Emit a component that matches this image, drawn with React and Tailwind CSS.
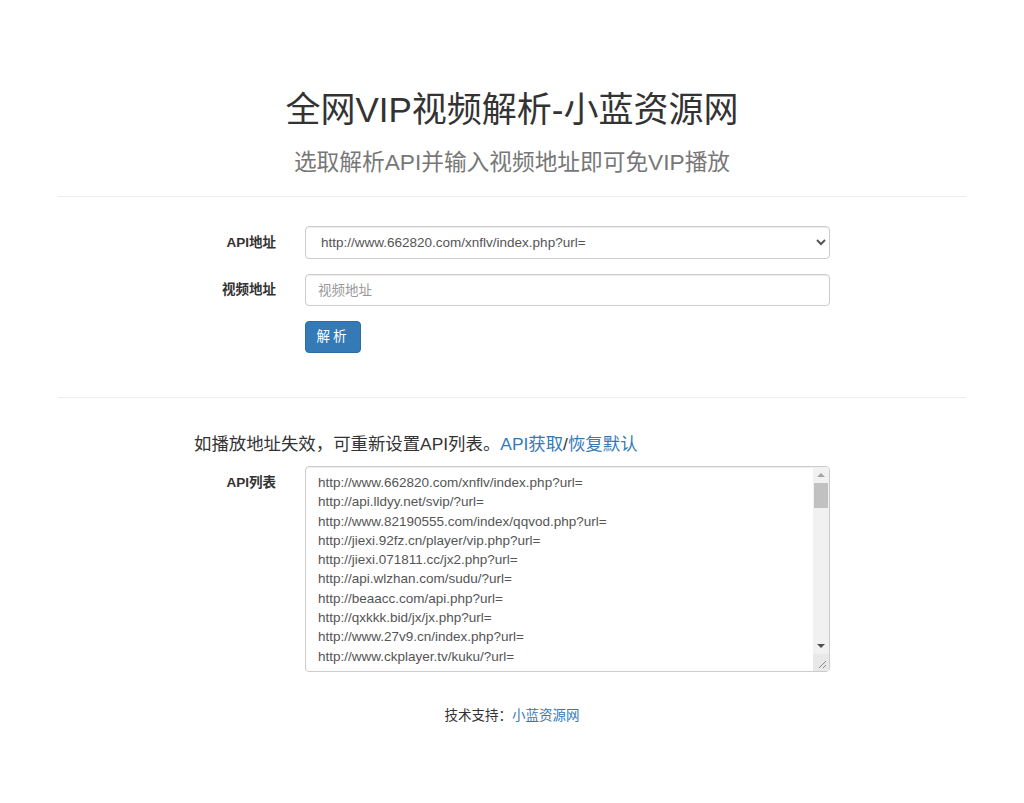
import { useState } from 'react';

const apis = [
  'http://www.662820.com/xnflv/index.php?url=',
  'http://api.lldyy.net/svip/?url=',
  'http://www.82190555.com/index/qqvod.php?url=',
  'http://jiexi.92fz.cn/player/vip.php?url=',
  'http://jiexi.071811.cc/jx2.php?url=',
  'http://api.wlzhan.com/sudu/?url=',
  'http://beaacc.com/api.php?url=',
  'http://qxkkk.bid/jx/jx.php?url=',
  'http://www.27v9.cn/index.php?url=',
  'http://www.ckplayer.tv/kuku/?url=',
  'http://jx.3gdown.cc/jx/?url=',
  'http://api.baiyug.cn/vip/index.php?url=',
  'http://jx.vgoodapi.com/jx.php?url=',
  'http://www.wmxz.wang/video.php?url=',
  'http://yun.baiyug.cn/vip/?url=',
  'http://api.xfsub.com/index.php?url=',
  'http://vip.jlsprh.com/index.php?url=',
  'http://jx.aeidu.cn/index.php?url=',
  'http://api.nepian.com/ckparse/?url=',
  'http://jx.drgxj.com/?url=',
  'http://www.sfsft.com/admin.php?url=',
  'http://vip.jlsprh.com/?url=',
];

const longList = [...apis, ...apis, ...apis].join('\n');

const font = { fontFamily: '"Liberation Sans", "Noto Sans CJK SC", sans-serif' };

export default function App() {
  const [api, setApi] = useState(apis[0]);
  const [list, setList] = useState(longList);
  const [video, setVideo] = useState('');

  return (
    <div className="min-h-screen bg-white text-[#333] text-[13.5px] leading-[19.3px]" style={font}>
      <div className="mx-auto w-[908px] pt-[91px] pb-10">
        <h1 className="text-center text-[35px] leading-[38px] font-normal">全网VIP视频解析-小蓝资源网</h1>
        <h3 className="mt-[21px] text-center text-[22.7px] leading-[25px] text-[#777]">
          选取解析API并输入视频地址即可免VIP播放
        </h3>
        <hr className="mt-[21px] border-t border-[#eee]" />

        <div className="mt-[29px] flex items-center">
          <label className="w-[218px] text-right font-bold">API地址</label>
          <select
            value={api}
            onChange={(e) => setApi(e.target.value)}
            className="ml-[29px] h-[33px] w-[525px] rounded-[4px] border border-[#ccc] bg-white px-[11px] text-[#555] shadow-[inset_0_1px_1px_rgba(0,0,0,0.075)] outline-none"
          >
            {apis.map((a, i) => (
              <option key={i} value={a}>{a}</option>
            ))}
          </select>
        </div>

        <div className="mt-[15px] flex items-center">
          <label className="w-[218px] text-right font-bold">视频地址</label>
          <input
            value={video}
            onChange={(e) => setVideo(e.target.value)}
            placeholder="视频地址"
            className="ml-[29px] h-[32px] w-[525px] rounded-[4px] border border-[#ccc] bg-white px-[12px] text-[#555] placeholder:text-[#999] shadow-[inset_0_1px_1px_rgba(0,0,0,0.075)] outline-none"
          />
        </div>

        <div className="mt-[15px] flex">
          <button className="ml-[247px] h-[32px] w-[56px] rounded-[4px] border border-[#2e6da4] bg-[#337ab7] text-white tracking-[3px]">
            解析
          </button>
        </div>

        <hr className="mt-[44px] border-t border-[#eee]" />

        <p className="ml-[136px] mt-[37px] text-[17.4px] leading-[19px]">
          如播放地址失效，可重新设置API列表。
          <a href="#" className="text-[#337ab7]">API获取</a>/
          <a href="#" className="text-[#337ab7]">恢复默认</a>
        </p>

        <div className="mt-[12px] flex items-start">
          <label className="w-[218px] pt-[7px] text-right font-bold">API列表</label>
          <div className="relative ml-[29px]">
            <textarea
              value={list}
              onChange={(e) => setList(e.target.value)}
              className="block h-[206px] w-[525px] resize-none rounded-[4px] border border-[#ccc] bg-white pl-[12px] pr-[20px] pt-[6px] text-[13.5px] leading-[19.3px] text-[#555] shadow-[inset_0_1px_1px_rgba(0,0,0,0.075)] outline-none"
            />
            {/* scrollbar drawn over the textarea */}
            <div className="pointer-events-none absolute right-[1px] top-[1px] bottom-[1px] flex w-[16px] flex-col rounded-r-[3px] bg-[#f1f1f1]">
              <div className="flex h-[16px] items-center justify-center">
                <div className="h-0 w-0 border-x-[4px] border-b-[4px] border-x-transparent border-b-[#a3a3a3]" />
              </div>
              <div className="mx-[1px] h-[25px] bg-[#c1c1c1]" />
              <div className="flex-1" />
              <div className="flex h-[16px] items-center justify-center">
                <div className="h-0 w-0 border-x-[4px] border-t-[4px] border-x-transparent border-t-[#505050]" />
              </div>
              <div className="flex h-[17px] items-end justify-end bg-[#e8e8e8] p-[2px]">
                <svg width="10" height="10" viewBox="0 0 10 10">
                  <path d="M9 2 L2 9 M9 6 L6 9" stroke="#888" strokeWidth="1" />
                </svg>
              </div>
            </div>
          </div>
        </div>

        <div className="mt-[34px] text-center">
          技术支持：<a href="#" className="text-[#337ab7]">小蓝资源网</a>
        </div>
      </div>
    </div>
  );
}
